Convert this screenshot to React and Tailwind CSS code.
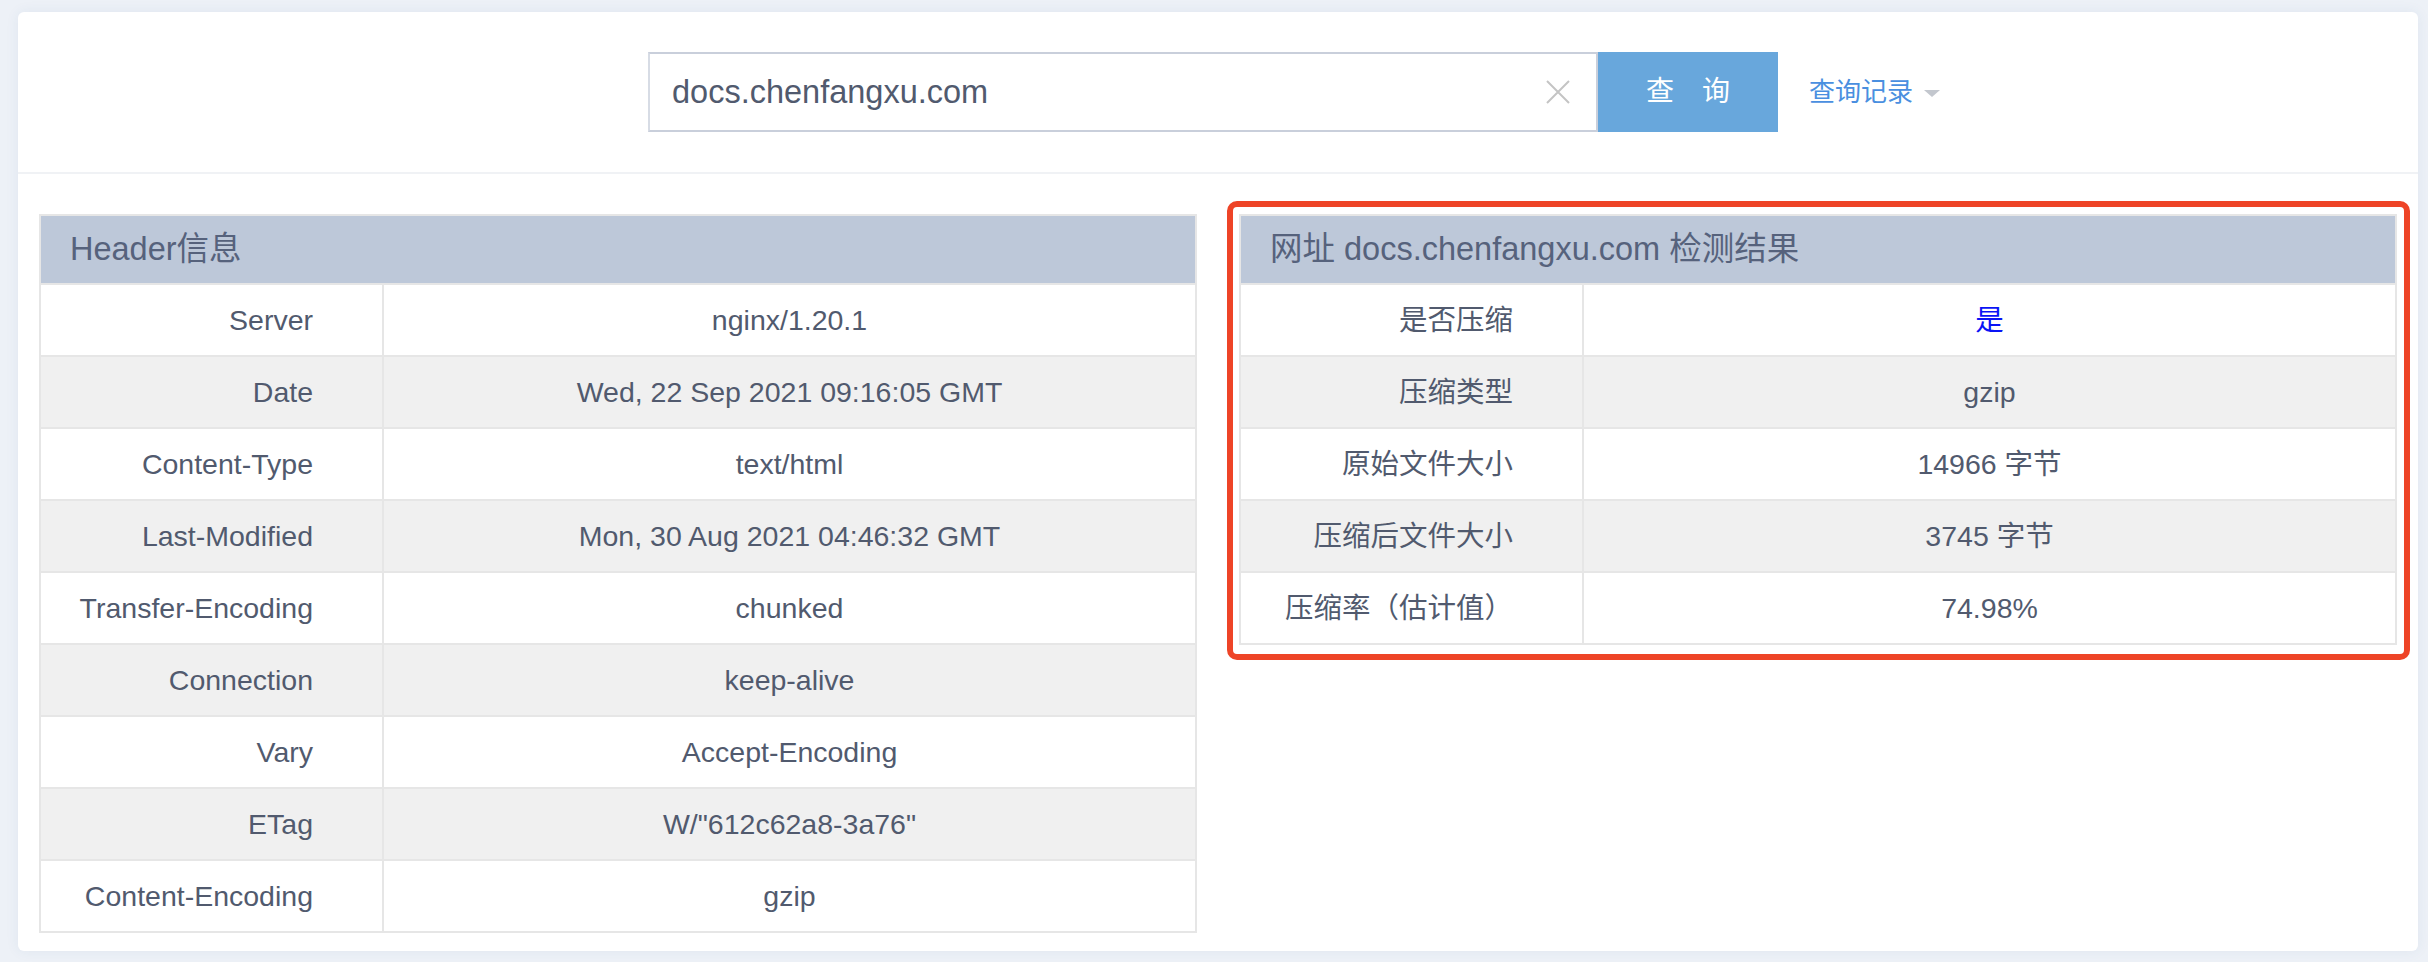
const headerRows = [
  ["Server", "nginx/1.20.1"],
  ["Date", "Wed, 22 Sep 2021 09:16:05 GMT"],
  ["Content-Type", "text/html"],
  ["Last-Modified", "Mon, 30 Aug 2021 04:46:32 GMT"],
  ["Transfer-Encoding", "chunked"],
  ["Connection", "keep-alive"],
  ["Vary", "Accept-Encoding"],
  ["ETag", 'W/"612c62a8-3a76"'],
  ["Content-Encoding", "gzip"],
];

const resultRows = [
  ["是否压缩", "是", true],
  ["压缩类型", "gzip"],
  ["原始文件大小", "14966 字节"],
  ["压缩后文件大小", "3745 字节"],
  ["压缩率（估计值）", "74.98%"],
];

function InfoTable({ title, rows }) {
  return (
    <div className="w-[1158px] border-2 border-[#e6e6e6]">
      <div className="h-[67px] bg-[#bdc8d9] flex items-center pl-[29px] text-[32.5px] text-[#56627c]">
        {title}
      </div>
      {rows.map(([label, value, highlight], idx) => (
        <div
          key={label}
          className={`flex h-[72px] border-t-2 border-[#e6e6e6] ${
            idx % 2 === 1 ? "bg-[#f0f0f0]" : "bg-white"
          }`}
        >
          <div className="w-[341px] shrink-0 flex items-center justify-end pr-[69px]">
            {label}
          </div>
          <div
            className={`flex-1 flex items-center justify-center border-l-2 border-[#e6e6e6] ${
              highlight ? "text-[#0a14f5]" : ""
            }`}
          >
            {value}
          </div>
        </div>
      ))}
    </div>
  );
}

function ClearIcon() {
  return (
    <svg width="24" height="24" viewBox="0 0 24 24" className="shrink-0">
      <path d="M1 1 L23 23 M23 1 L1 23" stroke="#c4c4c4" strokeWidth="2" fill="none" />
    </svg>
  );
}

export default function App() {
  return (
    <div className="min-h-screen bg-[#edf1f7] pt-[12px] pl-[18px] pr-[10px] pb-[9px] font-['Liberation_Sans','Noto_Sans_CJK_SC',sans-serif] text-[28.5px] text-[#515a6e]">
      <div className="bg-white rounded-[6px] shadow-[0_0_14px_rgba(40,80,140,0.07)]">
        {/* search bar */}
        <div className="h-[162px] grid grid-cols-[1fr_auto_1fr] items-center border-b-2 border-[#f0f2f5]">
          <div />
          <div className="flex -ml-[10px]">
            <div className="w-[950px] h-[80px] border-2 border-[#c9cfdb] border-l-[#d7dce5] flex items-center pl-[22px] pr-[26px]">
              <span className="flex-1 text-[32.5px] text-[#515a6e]">docs.chenfangxu.com</span>
              <ClearIcon />
            </div>
            <button className="w-[180px] h-[80px] bg-[#68a7dc] text-white text-[28px] flex items-center justify-center gap-[28px]">
              <span>查</span>
              <span>询</span>
            </button>
          </div>
          <div className="flex items-center pl-[31px] text-[26px] text-[#4a8fe0]">
            查询记录
            <span className="ml-[11px] mt-[2px] w-0 h-0 border-l-[8px] border-r-[8px] border-t-[7px] border-l-transparent border-r-transparent border-t-[#c3c7ce]" />
          </div>
        </div>

        {/* tables */}
        <div className="flex items-start gap-[42px] px-[21px] pt-[40px] pb-[18px]">
          <InfoTable title="Header信息" rows={headerRows} />
          <div className="relative">
            <InfoTable title="网址 docs.chenfangxu.com 检测结果" rows={resultRows} />
            <div className="absolute -left-[12px] -top-[13px] -right-[13px] -bottom-[15px] border-[6px] border-[#ee4427] rounded-[10px] pointer-events-none" />
          </div>
        </div>
      </div>
    </div>
  );
}
